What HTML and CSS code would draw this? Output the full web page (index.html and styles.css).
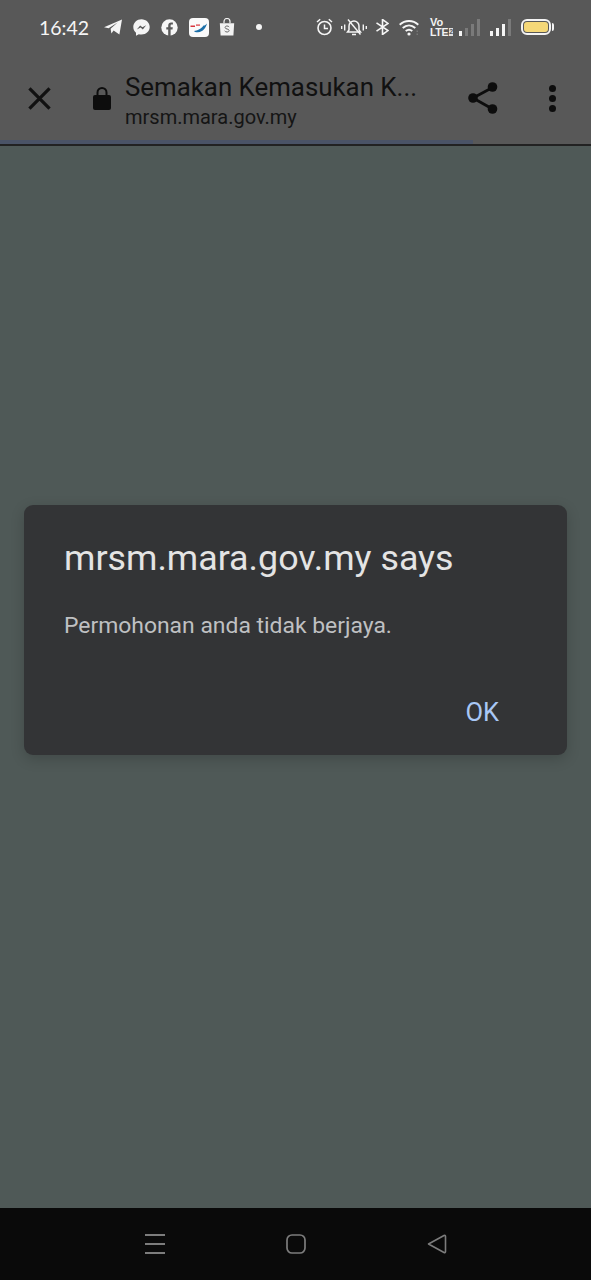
FILE: index.html
```html
<!DOCTYPE html>
<html lang="en">
<head>
<meta charset="UTF-8">
<meta name="viewport" content="width=device-width, initial-scale=1.0">
<title>Semakan Kemasukan</title>
<link rel="stylesheet" href="styles.css">
</head>
<body>

<div class="screen">
  <div class="statusbar">
    <div class="status-left">
      <span class="time">16:42</span>
      <svg class="ic-telegram" viewBox="0 0 18 16"><path d="M0 8.200 18 .5 15.400 15.600 9.600 11.600 7.400 14.600 6.600 9.800 13.600 3.600 4.600 9.200z" fill="#f5f5f5"/></svg>
      <svg class="ic-round" viewBox="0 0 17 17"><path d="M8.500.3C3.900.3.300 3.700.300 8c0 2.300 1 4.300 2.700 5.700v3l2.800-1.500c.8.2 1.700.3 2.700.3 4.600 0 8.200-3.400 8.200-7.500S13.100.3 8.500.3z" fill="#f5f5f5"/><path d="M3.800 10.600 7.200 6.400 9.400 8.300 13.200 6.200 9.800 10.400 7.600 8.500z" fill="#585858"/></svg>
      <svg class="ic-round" viewBox="0 0 17 17"><circle cx="8.500" cy="8.500" r="8.200" fill="#f5f5f5"/><path d="M7.200 17V10.600H5.300V8.200H7.200V6.500C7.200 4.500 8.400 3.400 10.200 3.400c.8 0 1.500.1 1.700.1v2.100h-1.200c-.9 0-1.100.5-1.100 1.100v1.500h2.200l-.3 2.400H9.600V17z" fill="#585858"/></svg>
      <svg class="ic-tile" viewBox="0 0 20 19"><rect width="20" height="19" rx="4" fill="#fafafa"/><path d="M1.500 7.500h4.500v1.500H1.500z" fill="#d8343c"/><path d="M7 6.500h4v1.200H7z" fill="#d8343c"/><path d="M5 13c3-.3 8-2.500 9.500-5.500 1 .2 2.500-.6 3.500-2-1 4-4 8.500-9 8.800-2 .1-3.500-.3-4-1.300z" fill="#1b6fa8"/></svg>
      <svg class="ic-shop" viewBox="0 0 16 18"><path d="M.8 5.200h14.400L14.400 17.500H1.600z" fill="#f2f2f2"/><path d="M5 5.200V3.500a3 3 0 0 1 6 0v1.700" fill="none" stroke="#f2f2f2" stroke-width="1.200"/><path d="M10.200 9c-.5-.7-1.300-1-2.200-1-1.100 0-1.900.6-1.900 1.500 0 2 4 1 4 3 0 1-.9 1.500-2.100 1.500-1 0-1.800-.4-2.300-1.100" fill="none" stroke="#666" stroke-width="1"/></svg>
      <span class="dot"></span>
    </div>
    <div class="status-right">
      <svg class="ic-alarm" viewBox="0 0 17 18"><circle cx="8.500" cy="10" r="6.500" fill="none" stroke="#f5f5f5" stroke-width="1.600"/><path d="M8.500 6.500V10.500H12M1 4 4.200 1.200M16 4 12.800 1.200" fill="none" stroke="#f5f5f5" stroke-width="1.500"/></svg>
      <svg class="ic-mute" viewBox="0 0 26 18"><path d="M6.500 14 8 12V8a5 5 0 0 1 10 0v4l1.500 2zM11 16.500h4" fill="none" stroke="#f5f5f5" stroke-width="1.500"/><path d="M7 1.500 19.500 16.500" stroke="#f5f5f5" stroke-width="1.400"/><path d="M.7 8v3M3.700 6.500v6M22.300 6.500v6M25.300 8v3" stroke="#f5f5f5" stroke-width="1.400"/></svg>
      <svg class="ic-bt" viewBox="0 0 13 16"><path d="M.5 3.800 12 11.600 6.500 15.500V.5L12 4.400.5 12.200" fill="none" stroke="#f5f5f5" stroke-width="1.600"/></svg>
      <svg class="ic-wifi" viewBox="0 0 20 17"><path d="M.7 5.800c5.400-5 13.200-5 18.600 0M3.700 9c3.800-3.400 8.800-3.400 12.600 0M6.700 12c2.100-1.700 4.500-1.700 6.600 0" fill="none" stroke="#f5f5f5" stroke-width="1.900"/><circle cx="10" cy="15" r="1.600" fill="#f5f5f5"/><path d="M17.500 11.500h1.500V13h-1.500zM17.500 14.500h1.500V16h-1.500z" fill="#777"/></svg>
      <div class="volte">
        <span class="vo">Vo</span>
        <span class="lte">LTE<i class="sim">2</i></span>
      </div>
      <div class="signal">
        <span class="bar h1 on"></span><span class="bar h2"></span><span class="bar h3"></span><span class="bar h4"></span>
      </div>
      <div class="signal">
        <span class="bar h1 on"></span><span class="bar h2 on"></span><span class="bar h3 on"></span><span class="bar h4"></span>
      </div>
      <div class="battery"><span class="battery-fill"></span></div>
    </div>
  </div>

  <div class="toolbar">
    <svg class="ic-close" viewBox="0 0 24 24"><path d="M1.500 1.500 22.500 22.500M22.500 1.500 1.500 22.500" stroke="#111" stroke-width="3.400"/></svg>
    <svg class="ic-lock" viewBox="0 0 18 24"><path d="M4.500 10V6.500a4.500 4.500 0 0 1 9 0V10" fill="none" stroke="#0d0d0d" stroke-width="2"/><rect y="9" width="18" height="15" rx="2" fill="#0d0d0d"/></svg>
    <div class="page-info">
      <div class="page-title">Semakan Kemasukan K...</div>
      <div class="page-url">mrsm.mara.gov.my</div>
    </div>
    <svg class="ic-share" viewBox="0 0 30 32"><path d="M24.500 5.500 5 16 24.500 27" fill="none" stroke="#0d0d0d" stroke-width="2.800"/><circle cx="24.500" cy="5" r="4.800" fill="#0d0d0d"/><circle cx="5" cy="16" r="4.800" fill="#0d0d0d"/><circle cx="24.500" cy="27" r="4.800" fill="#0d0d0d"/></svg>
    <div class="menu"><span></span><span></span><span></span></div>
  </div>
  <div class="progress"><div class="progress-fill"></div></div>

  <div class="content"></div>

  <div class="navbar">
    <svg class="ic-recent" viewBox="0 0 20 20"><path d="M0 1h20M0 10h20M0 19h20" stroke="#7c7c7c" stroke-width="2"/></svg>
    <svg class="ic-home" viewBox="0 0 20 20"><rect x="1" y="1" width="18" height="18" rx="5" fill="none" stroke="#7c7c7c" stroke-width="1.700"/></svg>
    <svg class="ic-back" viewBox="0 0 20 20"><path d="M1.500 10 17 1.500c.8-.4 1.500 0 1.500.9v15.200c0 .9-.7 1.300-1.500.9z" fill="none" stroke="#7c7c7c" stroke-width="1.600" stroke-linejoin="round"/></svg>
  </div>

  <div class="dialog">
    <div class="dialog-title">mrsm.mara.gov.my says</div>
    <div class="dialog-msg">Permohonan anda tidak berjaya.</div>
    <div class="dialog-actions"><span class="dialog-ok">OK</span></div>
  </div>
</div>

</body>
</html>
```

FILE: styles.css
```css
body {
  margin: 0;
  font-family: Roboto, "Liberation Sans", sans-serif;
}
svg {
  display: block;
  flex: none;
}
.screen {
  position: relative;
  display: flex;
  flex-direction: column;
  width: 591px;
  height: 1280px;
  overflow: hidden;
  background: #4f5957;
}

/* status bar */
.statusbar {
  display: flex;
  justify-content: space-between;
  align-items: center;
  height: 54px;
  padding: 0 38px 0 39px;
  background: #585858;
}
.status-left,
.status-right {
  display: flex;
  align-items: center;
}
.time {
  width: 50px;
  margin-right: 15px;
  color: #f5f5f5;
  font-family: Lato, Roboto, sans-serif;
  font-size: 19.5px;
  font-weight: 400;
  white-space: nowrap;
}
.ic-telegram { width: 18px; height: 16px; margin-right: 11px; }
.ic-round { width: 17px; height: 17px; margin-right: 11px; }
.ic-tile { width: 20px; height: 19px; margin-right: 10px; }
.ic-shop { width: 16px; height: 18px; margin-right: 21px; }
.dot {
  width: 6px;
  height: 6px;
  border-radius: 50%;
  background: #f5f5f5;
}
.ic-alarm { width: 17px; height: 18px; margin-right: 8px; }
.ic-mute { width: 26px; height: 18px; margin-right: 9px; }
.ic-bt { width: 13px; height: 16px; margin-right: 10px; }
.ic-wifi { width: 20px; height: 17px; margin-right: 11px; }
.volte {
  display: flex;
  flex-direction: column;
  width: 20px;
  margin-right: 9px;
  color: #f2f2f2;
  font-family: "Liberation Sans Narrow", "Liberation Sans", sans-serif;
  font-weight: 700;
}
.vo {
  font-size: 11px;
  line-height: 9px;
}
.lte {
  display: flex;
  align-items: center;
  margin-top: 1px;
  font-size: 10.5px;
  line-height: 9px;
  letter-spacing: -0.3px;
}
.sim {
  width: 6px;
  height: 8px;
  margin-left: 1px;
  background: #e0e0e0;
  color: #585858;
  font-size: 7px;
  font-style: normal;
  line-height: 8px;
  letter-spacing: 0;
  text-align: center;
}
.signal {
  display: flex;
  align-items: flex-end;
  gap: 3px;
  height: 17px;
  margin-right: 10px;
}
.bar {
  width: 3px;
  background: #7a7a7a;
}
.bar.on { background: #f5f5f5; }
.h1 { height: 5px; }
.h2 { height: 8px; }
.h3 { height: 12px; }
.h4 { height: 17px; }
.battery {
  position: relative;
  box-sizing: border-box;
  width: 30px;
  height: 16px;
  margin-right: 2px;
  padding: 1px;
  border: 2px solid #f4f4f4;
  border-radius: 6px;
}
.battery::after {
  content: "";
  position: absolute;
  top: 2px;
  right: -5px;
  width: 2px;
  height: 8px;
  border-radius: 0 2px 2px 0;
  background: #f4f4f4;
}
.battery-fill {
  display: block;
  height: 100%;
  border-radius: 3px;
  background: #f5d878;
}

/* chrome custom tab toolbar */
.toolbar {
  display: flex;
  align-items: center;
  height: 84px;
  padding: 2px 0 0 28px;
  background: #585858;
}
.ic-close { width: 23px; height: 23px; margin-right: 42px; }
.ic-lock { width: 18px; height: 24px; margin-right: 14px; }
.page-info {
  width: 321px;
  margin-top: 6px;
  margin-right: 22px;
}
.page-title {
  color: #111;
  font-size: 25.85px;
  line-height: 32px;
  white-space: nowrap;
}
.page-url {
  color: #151515;
  font-size: 20px;
  line-height: 28px;
  white-space: nowrap;
}
.ic-share { width: 30px; height: 32px; margin-right: 51px; }
.menu {
  display: flex;
  flex-direction: column;
  gap: 3px;
}
.menu span {
  width: 7px;
  height: 7px;
  border-radius: 50%;
  background: #0d0d0d;
}
.progress {
  height: 4px;
  border-bottom: 2px solid #222;
  background: #585858;
}
.progress-fill {
  width: 473px;
  height: 100%;
  background: #4a5366;
}
.content {
  flex: 1;
}
.navbar {
  display: flex;
  justify-content: center;
  align-items: center;
  gap: 121px;
  height: 72px;
  background: #0a0a0a;
}
.ic-recent,
.ic-home,
.ic-back {
  width: 20px;
  height: 20px;
}

/* js alert */
.dialog {
  position: absolute;
  top: 505px;
  left: 24px;
  box-sizing: border-box;
  width: 543px;
  height: 250px;
  padding: 31px 40px 0;
  border-radius: 9px;
  background: #333436;
  box-shadow: 0 4px 14px rgba(0, 0, 0, 0.18);
}
.dialog-title {
  color: #e4e4e4;
  font-size: 35.8px;
  line-height: 44px;
  white-space: nowrap;
}
.dialog-msg {
  margin-top: 31px;
  color: #bfc0c2;
  font-size: 22.9px;
  line-height: 30px;
}
.dialog-actions {
  display: flex;
  justify-content: flex-end;
  margin-top: 56px;
  padding-right: 28px;
}
.dialog-ok {
  color: #a9c7f5;
  font-size: 25.5px;
  line-height: 30px;
}
```
